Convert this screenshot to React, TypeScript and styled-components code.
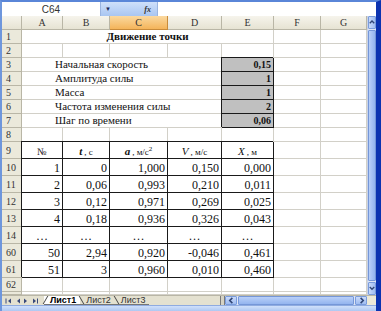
import React from 'react';
import styled, { createGlobalStyle, css } from 'styled-components';

const GlobalStyle = createGlobalStyle`
  html, body {
    margin: 0;
    padding: 0;
    overflow: hidden;
    background: #ffffff;
  }
`;

const COLS = '20px 41px 47px 58px 54px 52px 47px 46px';
const GRID = '#d2d0c8';
const HEAD_LINE = '#b9b6a6';

const Window = styled.div`
  width: 381px;
  height: 311px;
  box-sizing: border-box;
  border-top: 2px solid #5a86d8;
  border-left: 2px solid #6e96dc;
  border-right: 5px solid #0c33b0;
  display: flex;
  flex-direction: column;
  background: #ffffff;
  font-family: 'Liberation Serif', 'Times New Roman', serif;
  overflow: hidden;
`;

const FormulaBar = styled.div`
  height: 14px;
  display: flex;
  background: linear-gradient(#cfe0fa, #a9c6f2);
  flex-shrink: 0;
`;

const NameBox = styled.div`
  width: 98px;
  background: #fff;
  border-right: 1px solid #9ab4e0;
  font: 10px 'Liberation Sans', Arial, sans-serif;
  color: #333;
  display: flex;
  align-items: center;
  justify-content: center;
`;

const DropButton = styled.div`
  width: 14px;
  display: flex;
  align-items: center;
  justify-content: center;
  font-size: 6px;
  color: #1b2a55;
`;

const FxButton = styled.div`
  width: 42px;
  display: flex;
  align-items: center;
  justify-content: flex-end;
  padding-right: 6px;
  box-sizing: border-box;
  font: italic bold 8px 'Liberation Serif', serif;
  color: #333;
`;

const FormulaInput = styled.div`
  flex: 1;
  background: #fff;
  border-left: 1px solid #9ab4e0;
`;

const Body = styled.div`
  display: flex;
  height: 279px;
  flex-shrink: 0;
`;

const Sheet = styled.div`
  width: 365px;
  flex-shrink: 0;
  overflow: hidden;
`;

const Row = styled.div<{ $h: number }>`
  display: grid;
  grid-template-columns: ${COLS};
  height: ${(p) => p.$h}px;
`;

const headBase = css`
  background: linear-gradient(#f6f4ec, #e6e3d3);
  border-right: 1px solid ${HEAD_LINE};
  border-bottom: 1px solid ${HEAD_LINE};
  box-sizing: border-box;
  font-size: 10px;
  color: #333;
  display: flex;
  align-items: center;
  justify-content: center;
`;

const ColHead = styled.div<{ $active?: boolean }>`
  ${headBase};
  ${(p) =>
    p.$active &&
    css`
      background: linear-gradient(#fbd9a0, #f4b45a);
      border-right-color: #c98b3a;
      border-bottom-color: #c98b3a;
    `}
`;

const RowHead = styled.div`
  ${headBase};
  background: #ebe9db;
  justify-content: flex-start;
  padding-left: 4px;
  overflow: hidden;
`;

const Cell = styled.div<{
  $span?: number;
  $align?: 'left' | 'right' | 'center';
  $ruled?: boolean;
  $shade?: boolean;
  $bold?: boolean;
  $size?: number;
  $pad?: number;
}>`
  grid-column: span ${(p) => p.$span || 1};
  box-sizing: border-box;
  border-right: 1px solid ${(p) => (p.$ruled ? '#1a1a1a' : GRID)};
  border-bottom: 1px solid ${(p) => (p.$ruled ? '#1a1a1a' : GRID)};
  ${(p) => p.$ruled && 'box-shadow: -1px -1px 0 #1a1a1a;'}
  background: ${(p) => (p.$shade ? '#c0c0c0' : '#fff')};
  display: flex;
  align-items: flex-end;
  justify-content: ${(p) =>
    p.$align === 'right' ? 'flex-end' : p.$align === 'center' ? 'center' : 'flex-start'};
  padding: 0 2px 1px ${(p) => (p.$pad !== undefined ? p.$pad : 2)}px;
  font-size: ${(p) => p.$size || 11}px;
  font-weight: ${(p) => (p.$bold ? 700 : 400)};
  line-height: 1;
  color: #111;
  white-space: nowrap;
`;

const Sym = styled.span<{ $bold?: boolean }>`
  font-style: italic;
  font-weight: ${(p) => (p.$bold ? 700 : 400)};
  font-size: 11px;
`;

const Unit = styled.span`
  font-size: 9px;
  margin-left: 2px;
`;

const VScroll = styled.div`
  width: 9px;
  flex-shrink: 0;
  display: flex;
  flex-direction: column;
  background: #dfe6f5;
  border-left: 1px solid #c9d3e8;
  box-sizing: border-box;
`;

const ScrollBtn = styled.div`
  height: 13px;
  flex-shrink: 0;
  background: linear-gradient(90deg, #c9dafa, #9fbcf0);
  border: 1px solid #7a9cdc;
  border-radius: 1px;
  box-sizing: border-box;
  display: flex;
  align-items: center;
  justify-content: center;
`;

const Thumb = styled.div`
  flex: 1;
  margin: 1px 0;
  background: linear-gradient(90deg, #b9d0f9, #93b4ee);
  border: 1px solid #7597d8;
  border-radius: 1px;
`;

const BottomBar = styled.div`
  height: 9px;
  display: flex;
  align-items: stretch;
  background: #e4e1d0;
  border-top: 1px solid #b9b6a6;
  flex-shrink: 0;
`;

const TabNav = styled.div`
  width: 40px;
  flex-shrink: 0;
  display: flex;
  align-items: center;
  justify-content: space-around;
  padding: 0 2px;
  box-sizing: border-box;
`;

const Tabs = styled.div`
  display: flex;
  width: 178px;
  flex-shrink: 0;
  padding-left: 2px;
  box-sizing: border-box;
  font: 9px 'Liberation Sans', Arial, sans-serif;
  line-height: 1;
`;

const Tab = styled.div<{ $active?: boolean }>`
  position: relative;
  padding: 0 4px 0 6px;
  display: flex;
  align-items: center;
  color: ${(p) => (p.$active ? '#000' : '#333')};
  font-weight: ${(p) => (p.$active ? 700 : 400)};
  background: ${(p) => (p.$active ? '#ffffff' : 'transparent')};
  border-bottom: 1px solid #777;
  &::before {
    content: '';
    position: absolute;
    left: 1px;
    top: 0;
    bottom: 0;
    border-left: 1px solid #444;
    transform: skewX(${(p) => (p.$active ? '-30deg' : '30deg')});
  }
`;

const Splitter = styled.div`
  width: 5px;
  flex-shrink: 0;
  box-sizing: border-box;
  background: #d6d3c4;
  border-left: 1px solid #7a7a7a;
  border-right: 1px solid #7a7a7a;
`;

const HScroll = styled.div`
  width: 142px;
  flex-shrink: 0;
  display: flex;
  background: #dfe6f5;
`;

const HBtn = styled.div`
  width: 12px;
  flex-shrink: 0;
  background: linear-gradient(#c9dafa, #9fbcf0);
  border: 1px solid #7a9cdc;
  border-radius: 1px;
  box-sizing: border-box;
  display: flex;
  align-items: center;
  justify-content: center;
`;

const HThumb = styled.div`
  flex: 1;
  margin: 0 1px;
  background: linear-gradient(#b9d0f9, #93b4ee);
  border: 1px solid #7597d8;
  border-radius: 1px;
`;

const Corner = styled.div`
  flex: 1;
  background: #ece9d8;
`;

const StatusStrip = styled.div`
  flex: 1;
  background: linear-gradient(#d0e0fa, #aec8f2);
  border-top: 1px solid #8fabe0;
`;

type Dir = 'up' | 'down' | 'left' | 'right';

const Arrow = ({ dir, color = '#2f4575' }: { dir: Dir; color?: string }) => {
  const pts: Record<Dir, string> = {
    up: '1,5 4,2 7,5',
    down: '1,2 4,5 7,2',
    left: '5,1 2,4 5,7',
    right: '3,1 6,4 3,7',
  };
  return (
    <svg width="7" height="7" viewBox="0 0 8 8" style={{ display: 'block' }}>
      <polyline points={pts[dir]} fill="none" stroke={color} strokeWidth="1.8" />
    </svg>
  );
};

const NavTri = ({ dir, bar }: { dir: 'left' | 'right'; bar?: boolean }) => (
  <svg width="7" height="6" viewBox="0 0 7 6">
    {dir === 'left' ? (
      <>
        {bar && <rect x="0.5" y="0.5" width="1" height="5" fill="#3a4a7a" />}
        <polygon points="6,0.5 3,3 6,5.5" fill="#3a4a7a" />
      </>
    ) : (
      <>
        <polygon points="1,0.5 4,3 1,5.5" fill="#3a4a7a" />
        {bar && <rect x="5" y="0.5" width="1" height="5" fill="#3a4a7a" />}
      </>
    )}
  </svg>
);

const params: [string, string][] = [
  ['Начальная скорость', '0,15'],
  ['Амплитуда силы', '1'],
  ['Масса', '1'],
  ['Частота изменения силы', '2'],
  ['Шаг по времени', '0,06'],
];

const data: [string, string[]][] = [
  ['10', ['1', '0', '1,000', '0,150', '0,000']],
  ['11', ['2', '0,06', '0,993', '0,210', '0,011']],
  ['12', ['3', '0,12', '0,971', '0,269', '0,025']],
  ['13', ['4', '0,18', '0,936', '0,326', '0,043']],
  ['14', ['…', '…', '…', '…', '…']],
  ['60', ['50', '2,94', '0,920', '-0,046', '0,461']],
  ['61', ['51', '3', '0,960', '0,010', '0,460']],
];

const Blanks = ({ n }: { n: number }) => (
  <>
    {Array.from({ length: n }).map((_, i) => (
      <Cell key={i} />
    ))}
  </>
);

export default function App() {
  return (
    <Window>
      <GlobalStyle />
      <FormulaBar>
        <NameBox>C64</NameBox>
        <DropButton>▼</DropButton>
        <FxButton>fx</FxButton>
        <FormulaInput />
      </FormulaBar>
      <Body>
        <Sheet>
          <Row $h={14}>
            <ColHead />
            {['A', 'B', 'C', 'D', 'E', 'F', 'G'].map((c) => (
              <ColHead key={c} $active={c === 'C'}>
                {c}
              </ColHead>
            ))}
          </Row>
          <Row $h={14}>
            <RowHead>1</RowHead>
            <Cell $span={5} $align="center" $bold>
              Движение точки
            </Cell>
            <Blanks n={2} />
          </Row>
          <Row $h={14}>
            <RowHead>2</RowHead>
            <Blanks n={7} />
          </Row>
          {params.map(([label, value], i) => (
            <Row $h={14} key={label}>
              <RowHead>{i + 3}</RowHead>
              <Cell $span={4} $pad={33}>
                {label}
              </Cell>
              <Cell $ruled $shade $bold $align="right" $size={10}>
                {value}
              </Cell>
              <Blanks n={2} />
            </Row>
          ))}
          <Row $h={14}>
            <RowHead>8</RowHead>
            <Blanks n={7} />
          </Row>
          <Row $h={17}>
            <RowHead>9</RowHead>
            <Cell $ruled $align="center" $size={10}>
              №
            </Cell>
            <Cell $ruled $align="center">
              <Sym $bold>t</Sym>
              <Unit>, с</Unit>
            </Cell>
            <Cell $ruled $align="center">
              <Sym $bold>a</Sym>
              <Unit>
                , м/с<sup style={{ fontSize: 7 }}>2</sup>
              </Unit>
            </Cell>
            <Cell $ruled $align="center">
              <Sym>V</Sym>
              <Unit>, м/с</Unit>
            </Cell>
            <Cell $ruled $align="center">
              <Sym>X</Sym>
              <Unit>, м</Unit>
            </Cell>
            <Blanks n={2} />
          </Row>
          {data.map(([rn, vals]) => (
            <Row $h={17} key={rn}>
              <RowHead>{rn}</RowHead>
              {vals.map((v, i) => (
                <Cell key={i} $ruled $size={12} $align={v === '…' ? 'center' : 'right'}>
                  {v}
                </Cell>
              ))}
              <Blanks n={2} />
            </Row>
          ))}
          <Row $h={14}>
            <RowHead>62</RowHead>
            <Blanks n={7} />
          </Row>
          <Row $h={3}>
            <RowHead />
            <Blanks n={7} />
          </Row>
        </Sheet>
        <VScroll>
          <ScrollBtn>
            <Arrow dir="up" />
          </ScrollBtn>
          <Thumb />
          <ScrollBtn>
            <Arrow dir="down" />
          </ScrollBtn>
        </VScroll>
      </Body>
      <BottomBar>
        <TabNav>
          <NavTri dir="left" bar />
          <NavTri dir="left" />
          <NavTri dir="right" />
          <NavTri dir="right" bar />
        </TabNav>
        <Tabs>
          <Tab $active>Лист1</Tab>
          <Tab>Лист2</Tab>
          <Tab>Лист3</Tab>
        </Tabs>
        <Splitter />
        <HScroll>
          <HBtn>
            <Arrow dir="left" />
          </HBtn>
          <HThumb />
          <HBtn>
            <Arrow dir="right" />
          </HBtn>
        </HScroll>
        <Corner />
      </BottomBar>
      <StatusStrip />
    </Window>
  );
}
